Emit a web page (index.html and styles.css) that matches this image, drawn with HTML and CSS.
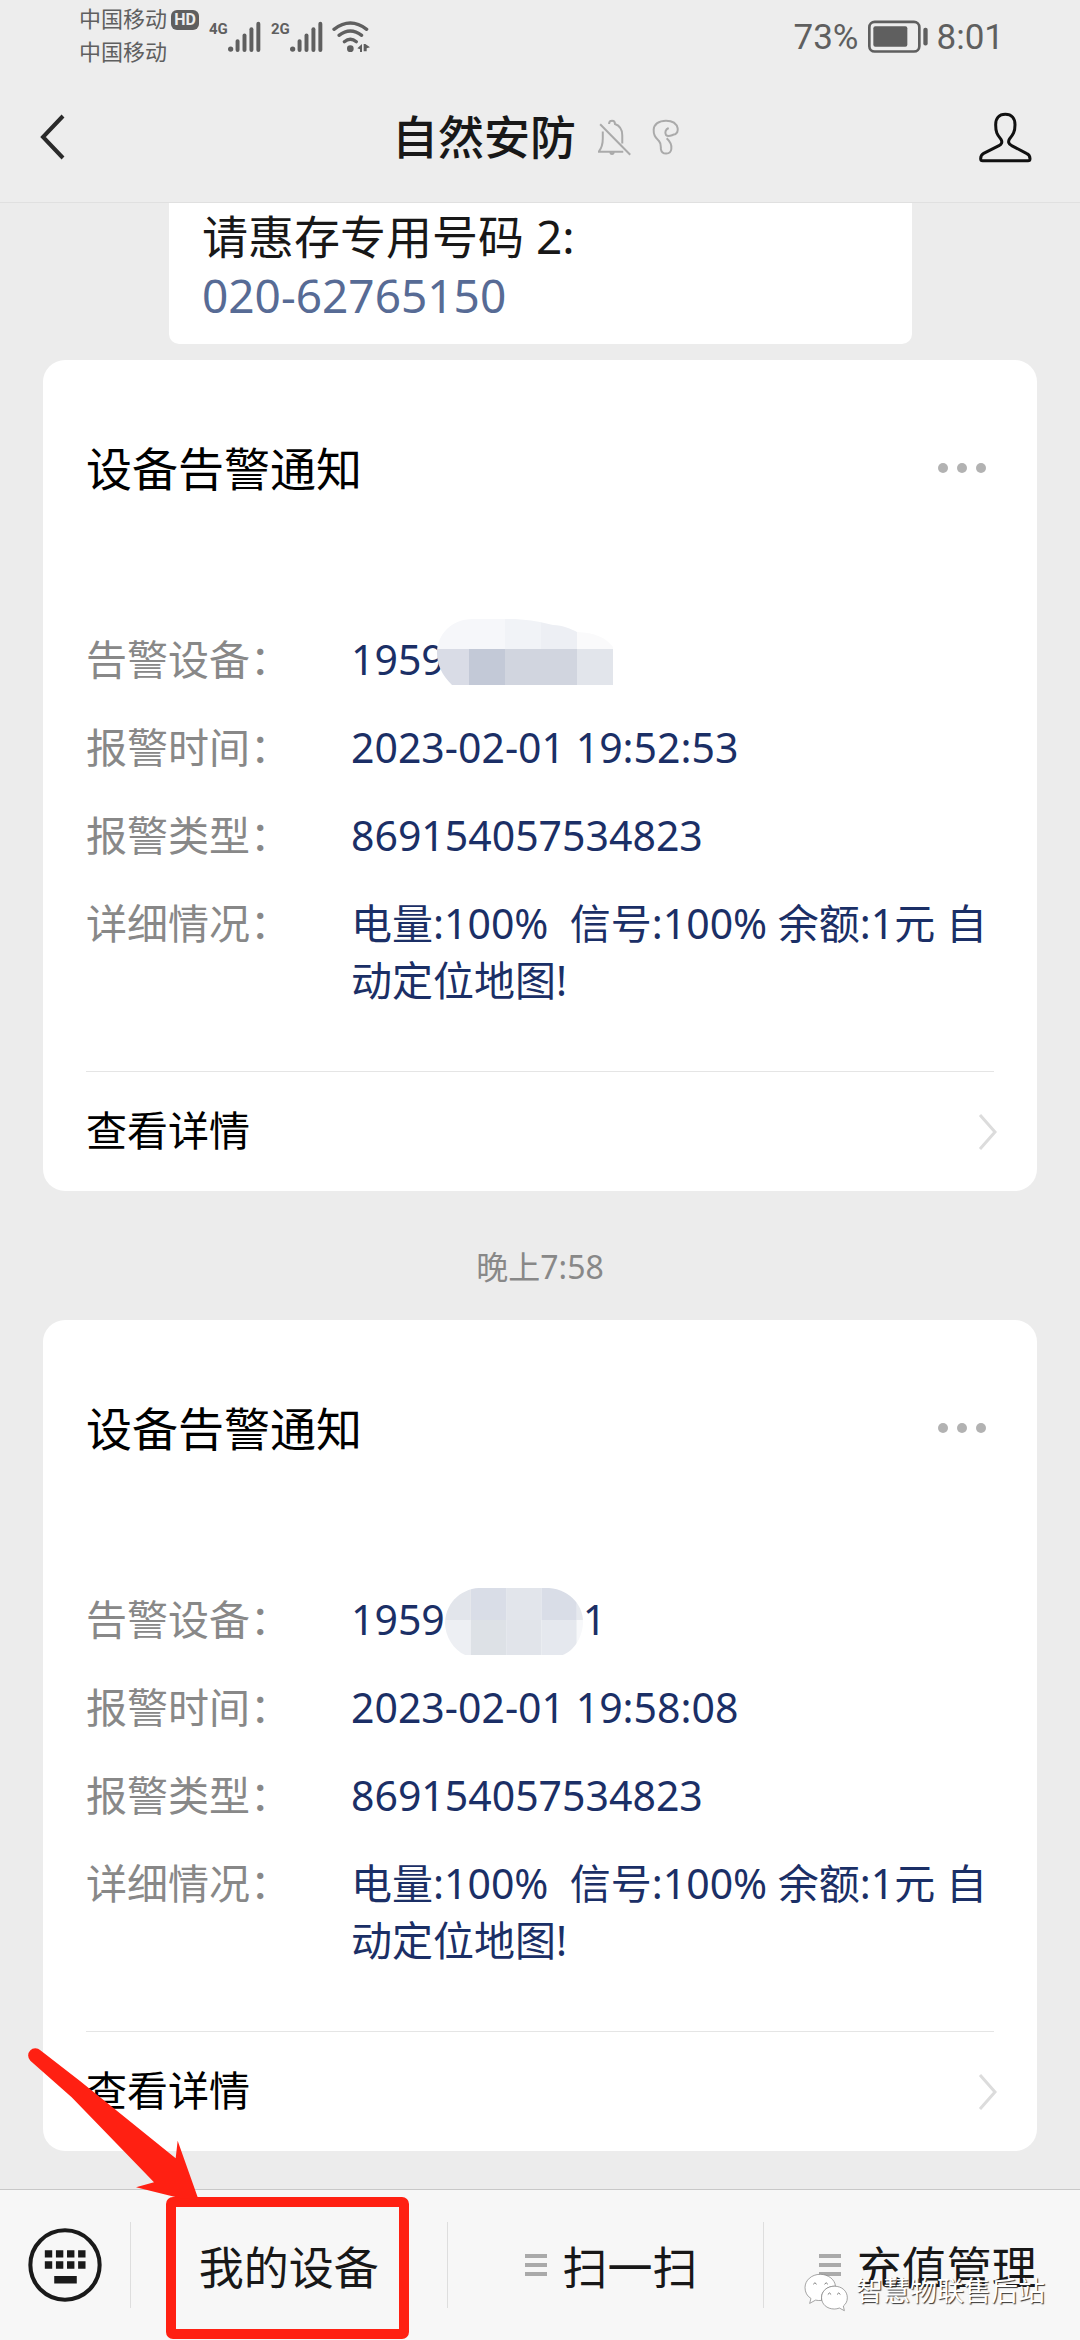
FILE: index.html
```html
<!DOCTYPE html>
<html lang="zh-CN">
<head>
<meta charset="utf-8">
<meta name="viewport" content="width=device-width, initial-scale=1">
<title>自然安防</title>
<link rel="stylesheet" href="styles.css">
</head>
<body>
<header class="top">
  <div class="status">
    <div class="carriers">
      <div class="carrier">中国移动<span class="hd">HD</span></div>
      <div class="carrier">中国移动</div>
    </div>
    <div class="signal">
      <span class="gen">4G</span>
      <svg class="bars" viewBox="502 60 100 94" aria-hidden="true"><circle cx="510" cy="145" r="8"/><rect x="525" y="115" width="12" height="39" rx="6"/><rect x="546" y="98" width="12" height="56" rx="6"/><rect x="567" y="79" width="12" height="75" rx="6"/><rect x="588" y="62" width="12" height="92" rx="6"/></svg>
    </div>
    <div class="signal">
      <span class="gen">2G</span>
      <svg class="bars" viewBox="502 60 100 94" aria-hidden="true"><circle cx="510" cy="145" r="8"/><rect x="525" y="115" width="12" height="39" rx="6"/><rect x="546" y="98" width="12" height="56" rx="6"/><rect x="567" y="79" width="12" height="75" rx="6"/><rect x="588" y="62" width="12" height="92" rx="6"/></svg>
    </div>
    <svg class="wifi" viewBox="812 58 117 99" aria-hidden="true"><g fill="none" stroke="#5f5f5f" stroke-width="10" stroke-linecap="round"><path d="M818 86Q867 48 916 86"/><path d="M833 104Q867 78 901 104"/><path d="M849 123Q867 108 885 123"/></g><circle cx="867" cy="144" r="10"/><path d="M888 143L902 130V154H896V146ZM907 130H912L926 140L916 143V152H907Z"/></svg>
    <div class="status-right">
      <span>73%</span>
      <svg class="battery" viewBox="317 60 180 98" aria-hidden="true"><rect x="321" y="65" width="150" height="89" rx="16" fill="none" stroke="#5f5f5f" stroke-width="8"/><rect x="333" y="78" width="102" height="62" rx="6"/><rect x="483" y="83" width="13" height="53" rx="6"/></svg>
      <span>8:01</span>
    </div>
  </div>
  <nav class="nav">
    <button class="icon-button" type="button" aria-label="返回"><svg class="back" viewBox="0 0 26 46"><path d="M23 2L3 23L23 44"/></svg></button>
    <div class="nav-title">
      <h1>自然安防</h1>
      <svg class="bell" viewBox="26 28 102 112" aria-hidden="true"><path d="M59 43Q59 33 68 33Q77 33 77 43Q99 51 99 77V102M40 66V88Q40 112 28 127H102M63 127Q63 134 68 134Q73 134 73 127M32 44L123 136"/></svg>
      <svg class="ear" viewBox="190 30 84 108" aria-hidden="true"><path d="M240 57C230 62 228 70 232 78C240 86 250 77 259 76C266 72 268 65 267 58C264 44 254 35 232 35C210 35 196 46 195 62C194 80 202 86 211 96C220 106 215 116 217 122C220 138 246 138 248 120C250 106 245 98 234 88"/></svg>
    </div>
    <button class="icon-button nav-end" type="button" aria-label="公众号资料"><svg class="person" viewBox="656 336 159 153"><path d="M735 343C715 343 706 356 706 374C706 400 712 405 722 418C727 426 724 433 716 437L670 460C662 464 661 470 661 476Q661 482 667 482H803Q809 482 809 476C809 470 808 464 798 460L754 437C745 433 742 425 748 416C758 404 764 396 764 374C764 356 755 343 735 343Z"/></svg></button>
  </nav>
</header>

<main class="chat">
  <div class="bubble">请惠存专用号码 2:<br><a href="tel:020-62765150">020-62765150</a></div>

  <article class="card">
    <div class="card-head">
      <h2>设备告警通知</h2>
      <button class="icon-button" type="button" aria-label="更多"><svg class="dots" viewBox="0 0 48 10"><circle cx="5" cy="5" r="5"/><circle cx="24" cy="5" r="5"/><circle cx="43" cy="5" r="5"/></svg></button>
    </div>
    <dl class="fields">
      <dt>告警设备：</dt>
      <dd>1959<span class="mask mask-wide"><svg viewBox="436 618 176 66" aria-hidden="true"><clipPath id="m1"><path d="M451 684C441 674 436 664 436 652C436 634 450 618 472 618H514C530 619 540 621 552 624C562 624 570 628 576 631C594 632 604 636 612 646V684Z"/></clipPath><g clip-path="url(#m1)"><path fill="#f6f7fa" d="M436 618h68v30h-68z"/><path fill="#f1f3f7" d="M504 618h36v30h-36z"/><path fill="#edeff4" d="M540 618h36v30h-36z"/><path fill="#fafafb" d="M576 618h36v30h-36z"/><path fill="#d9dce6" d="M436 648h32v36h-32z"/><path fill="#c3c9d7" d="M468 648h36v36h-36z"/><path fill="#d1d5df" d="M504 648h72v36h-72z"/><path fill="#e2e5eb" d="M576 648h36v36h-36z"/></g></svg></span></dd>
      <dt>报警时间：</dt>
      <dd>2023-02-01 19:52:53</dd>
      <dt>报警类型：</dt>
      <dd>869154057534823</dd>
      <dt>详细情况：</dt>
      <dd>电量:100%&nbsp; 信号:100% 余额:1元 自动定位地图!</dd>
    </dl>
    <a class="card-link" href="#detail-1"><span>查看详情</span><svg class="chevron" viewBox="0 0 20 36" aria-hidden="true"><path d="M2 1L17 18L2 35"/></svg></a>
  </article>

  <time class="stamp">晚上7:58</time>

  <article class="card">
    <div class="card-head">
      <h2>设备告警通知</h2>
      <button class="icon-button" type="button" aria-label="更多"><svg class="dots" viewBox="0 0 48 10"><circle cx="5" cy="5" r="5"/><circle cx="24" cy="5" r="5"/><circle cx="43" cy="5" r="5"/></svg></button>
    </div>
    <dl class="fields">
      <dt>告警设备：</dt>
      <dd>1959<span class="mask mask-round"><svg viewBox="305 141 422 207" aria-hidden="true"><clipPath id="m2"><path d="M368 348C330 330 305 290 305 248C308 180 360 141 420 141H610C680 141 727 190 727 245C727 290 700 335 662 348Z"/></clipPath><g clip-path="url(#m2)"><path fill="#e2e5eb" d="M305 141h79v99h-79zM492 141h108v99H492z"/><path fill="#d9dde7" d="M384 141h108v99H384zM600 141h108v99H600z"/><path fill="#e6e9ee" d="M708 141h20v99h-20z"/><path fill="#edeff3" d="M305 240h79v108h-79z"/><path fill="#dde1e6" d="M384 240h108v108H384z"/><path fill="#e1e4ea" d="M492 240h108v108H492z"/><path fill="#e5e8ee" d="M600 240h108v108H600z"/><path fill="#f7f8fa" d="M708 240h20v108h-20z"/></g></svg></span>1</dd>
      <dt>报警时间：</dt>
      <dd>2023-02-01 19:58:08</dd>
      <dt>报警类型：</dt>
      <dd>869154057534823</dd>
      <dt>详细情况：</dt>
      <dd>电量:100%&nbsp; 信号:100% 余额:1元 自动定位地图!</dd>
    </dl>
    <a class="card-link" href="#detail-2"><span>查看详情</span><svg class="chevron" viewBox="0 0 20 36" aria-hidden="true"><path d="M2 1L17 18L2 35"/></svg></a>
  </article>
</main>

<footer class="menu">
  <button class="keyboard" type="button" aria-label="切换键盘"><svg viewBox="86 626 220 220"><circle cx="196" cy="736" r="103" fill="none" stroke="#1a1a1a" stroke-width="12"/><path d="M136 692h22v22h-22zM169 692h22v22h-22zM202 692h22v22h-22zM235 692h22v22h-22zM136 725h22v22h-22zM169 725h22v22h-22zM202 725h22v22h-22zM235 725h22v22h-22zM164 769h67v22h-67z"/></svg></button>
  <button class="menu-item" type="button">我的设备<span class="highlight"></span></button>
  <button class="menu-item" type="button"><svg class="list" viewBox="0 0 22 22" aria-hidden="true"><path d="M0 0h22v4H0zM0 9h22v4H0zM0 18h22v4H0z"/></svg>扫一扫</button>
  <button class="menu-item" type="button"><svg class="list" viewBox="0 0 22 22" aria-hidden="true"><path d="M0 0h22v4H0zM0 9h22v4H0zM0 18h22v4H0z"/></svg>充值管理</button>
  <svg class="arrow" viewBox="84 84 516 456" aria-hidden="true"><path d="M121 91L240 183L527 415L533 362L596 540L535 533L408 502L462 487L215 232L91 122A21 21 0 0 1 121 91Z"/></svg>
  <div class="watermark">
    <svg viewBox="28 90 134 118" aria-hidden="true"><path d="M76 94C100 94 121 110 122 130C100 128 80 145 80 162V173Q70 174 62 172L44 182L48 167C36 160 30 148 30 134C30 112 50 94 76 94Z"/><path d="M119 130C142 130 158 145 158 165C158 177 153 184 146 190L149 204L134 196Q126 199 119 199C96 199 80 184 80 165C80 145 96 130 119 130Z"/><path class="eye" d="M55 124q5-9 10 0M89 124q5-9 10 0M99 155q5-9 10 0M127 155q5-9 10 0"/></svg>
    <span>智慧物联售后站</span>
  </div>
</footer>
</body>
</html>
```
FILE: styles.css
```css
* {
  box-sizing: border-box;
}

body {
  margin: 0;
  min-height: 100vh;
  display: flex;
  flex-direction: column;
  background: #ececec;
  color: #181818;
  font-family: Roboto, "Noto Sans CJK SC", sans-serif;
  font-size: 41px;
}

h1,
h2,
dl,
dd {
  margin: 0;
}

button {
  padding: 0;
  border: 0;
  background: none;
  color: inherit;
  font: inherit;
}

svg {
  display: block;
  flex: none;
}

a {
  color: inherit;
  text-decoration: none;
}

/* Status bar and title bar */
.top {
  background: #ededed;
  border-bottom: 1px solid #e0e0e0;
}

.status {
  display: flex;
  align-items: center;
  height: 72px;
  padding: 0 76px 0 79px;
  color: #5f5f5f;
  fill: #5f5f5f;
}

.carrier {
  display: flex;
  align-items: center;
  gap: 4px;
  font-size: 22px;
  line-height: 33px;
}

.hd {
  width: 28px;
  border-radius: 6px;
  background: #5f5f5f;
  color: #ededed;
  font-size: 16px;
  font-weight: 700;
  line-height: 20px;
  text-align: center;
}

.signal {
  display: flex;
  align-items: flex-start;
  margin-left: 10px;
}

.gen {
  width: 19px;
  font-size: 15px;
  font-weight: 700;
  line-height: 16px;
}

.bars {
  width: 33px;
  height: 31px;
}

.wifi {
  width: 39px;
  height: 33px;
  margin-left: 9px;
}

.status-right {
  display: flex;
  align-items: center;
  gap: 9px;
  margin-left: auto;
  font-size: 35px;
  line-height: 40px;
}

.status-right span {
  padding-top: 3px;
}

.battery {
  width: 60px;
  height: 33px;
}

.nav {
  display: grid;
  grid-template-columns: 1fr auto 1fr;
  align-items: center;
  height: 130px;
  padding: 0 48px 0 40px;
}

.nav svg {
  fill: none;
}

.icon-button {
  justify-self: start;
}

.nav-end {
  justify-self: end;
}

.back {
  width: 26px;
  height: 46px;
  stroke: #2a2a2a;
  stroke-width: 4;
}

.person {
  width: 53px;
  height: 51px;
  stroke: #111;
  stroke-width: 9;
}

.nav-title {
  display: flex;
  align-items: center;
}

.nav-title h1 {
  padding-top: 2px;
  font-size: 46px;
  font-weight: 500;
  line-height: 60px;
}

.bell,
.ear {
  stroke: #aaa;
  stroke-width: 6;
}

.bell {
  width: 34px;
  height: 37px;
  margin-left: 22px;
}

.ear {
  width: 28px;
  height: 36px;
  margin-left: 20px;
}

/* Conversation */
.chat {
  flex: 1;
  display: flex;
  flex-direction: column;
  padding: 0 43px 38px;
  font-family: "Noto Sans", "Noto Sans CJK SC", sans-serif;
}

.bubble {
  margin: 0 125px 16px 126px;
  padding: 4px 33px 19px;
  border-radius: 0 0 10px 10px;
  background: #fff;
  font-size: 46px;
  line-height: 59px;
}

.bubble a {
  color: #576b95;
}

.card {
  padding: 78px 43px 0;
  border-radius: 22px;
  background: #fff;
  color: #000;
}

.card-head {
  display: flex;
  align-items: center;
  justify-content: space-between;
  padding-right: 8px;
}

.card-head h2 {
  font-size: 46px;
  font-weight: 400;
  line-height: 60px;
}

.dots {
  width: 48px;
  height: 10px;
  fill: #b2b2b2;
}

.fields {
  display: grid;
  grid-template-columns: 265px 1fr;
  row-gap: 31px;
  padding: 133px 0 62px;
  line-height: 57px;
}

.fields dt {
  color: #888;
}

.fields dd {
  color: #1b2f66;
}

.mask {
  position: relative;
  display: inline-block;
  height: 1px;
}

.mask svg {
  position: absolute;
  left: 0;
  bottom: -21px;
}

.mask-wide {
  width: 176px;
  margin-left: -8px;
}

.mask-wide svg {
  bottom: -10px;
  width: 176px;
  height: 66px;
}

.mask-round {
  width: 138px;
}

.mask-round svg {
  width: 138px;
  height: 69px;
}

.card-link {
  display: flex;
  align-items: center;
  justify-content: space-between;
  height: 120px;
  border-top: 1px solid #e5e5e5;
}

.card-link span {
  padding-bottom: 8px;
}

.chevron {
  width: 20px;
  height: 36px;
  margin-right: -4px;
  fill: none;
  stroke: #dcdcdc;
  stroke-width: 3;
}

.stamp {
  padding: 54px 0 31px;
  color: #888;
  font-size: 32px;
  line-height: 44px;
  text-align: center;
}

/* Bottom menu */
.menu {
  position: relative;
  display: flex;
  align-items: center;
  height: 151px;
  border-top: 1px solid #c8c8c8;
  background: #f7f7f7;
  font-size: 45px;
}

.keyboard {
  width: 130px;
  padding: 0 28px;
}

.keyboard svg {
  width: 74px;
  height: 74px;
  fill: #1a1a1a;
}

.menu-item {
  position: relative;
  flex: 1;
  display: flex;
  align-items: center;
  justify-content: center;
  height: 86px;
  border-left: 1px solid #dedede;
}

.list {
  width: 22px;
  height: 22px;
  margin: 0 16px 0 11px;
  fill: #aaa;
}

.highlight {
  position: absolute;
  inset: -25px 38px -31px 35px;
  border: 10px solid #ff2012;
  border-radius: 7px;
}

.arrow {
  position: absolute;
  left: 28px;
  top: -142px;
  width: 172px;
  height: 152px;
  fill: #ff2012;
}

.watermark {
  position: absolute;
  right: 35px;
  bottom: 28px;
  display: flex;
  align-items: center;
  gap: 7px;
  color: #fff;
  font-size: 27px;
  line-height: 40px;
  text-shadow: 1px 1px 1px #333;
}

.watermark svg {
  width: 45px;
  height: 39px;
  fill: #fff;
  stroke: #777;
  stroke-width: 2;
}

.watermark .eye {
  fill: none;
  stroke-width: 3;
}
```
